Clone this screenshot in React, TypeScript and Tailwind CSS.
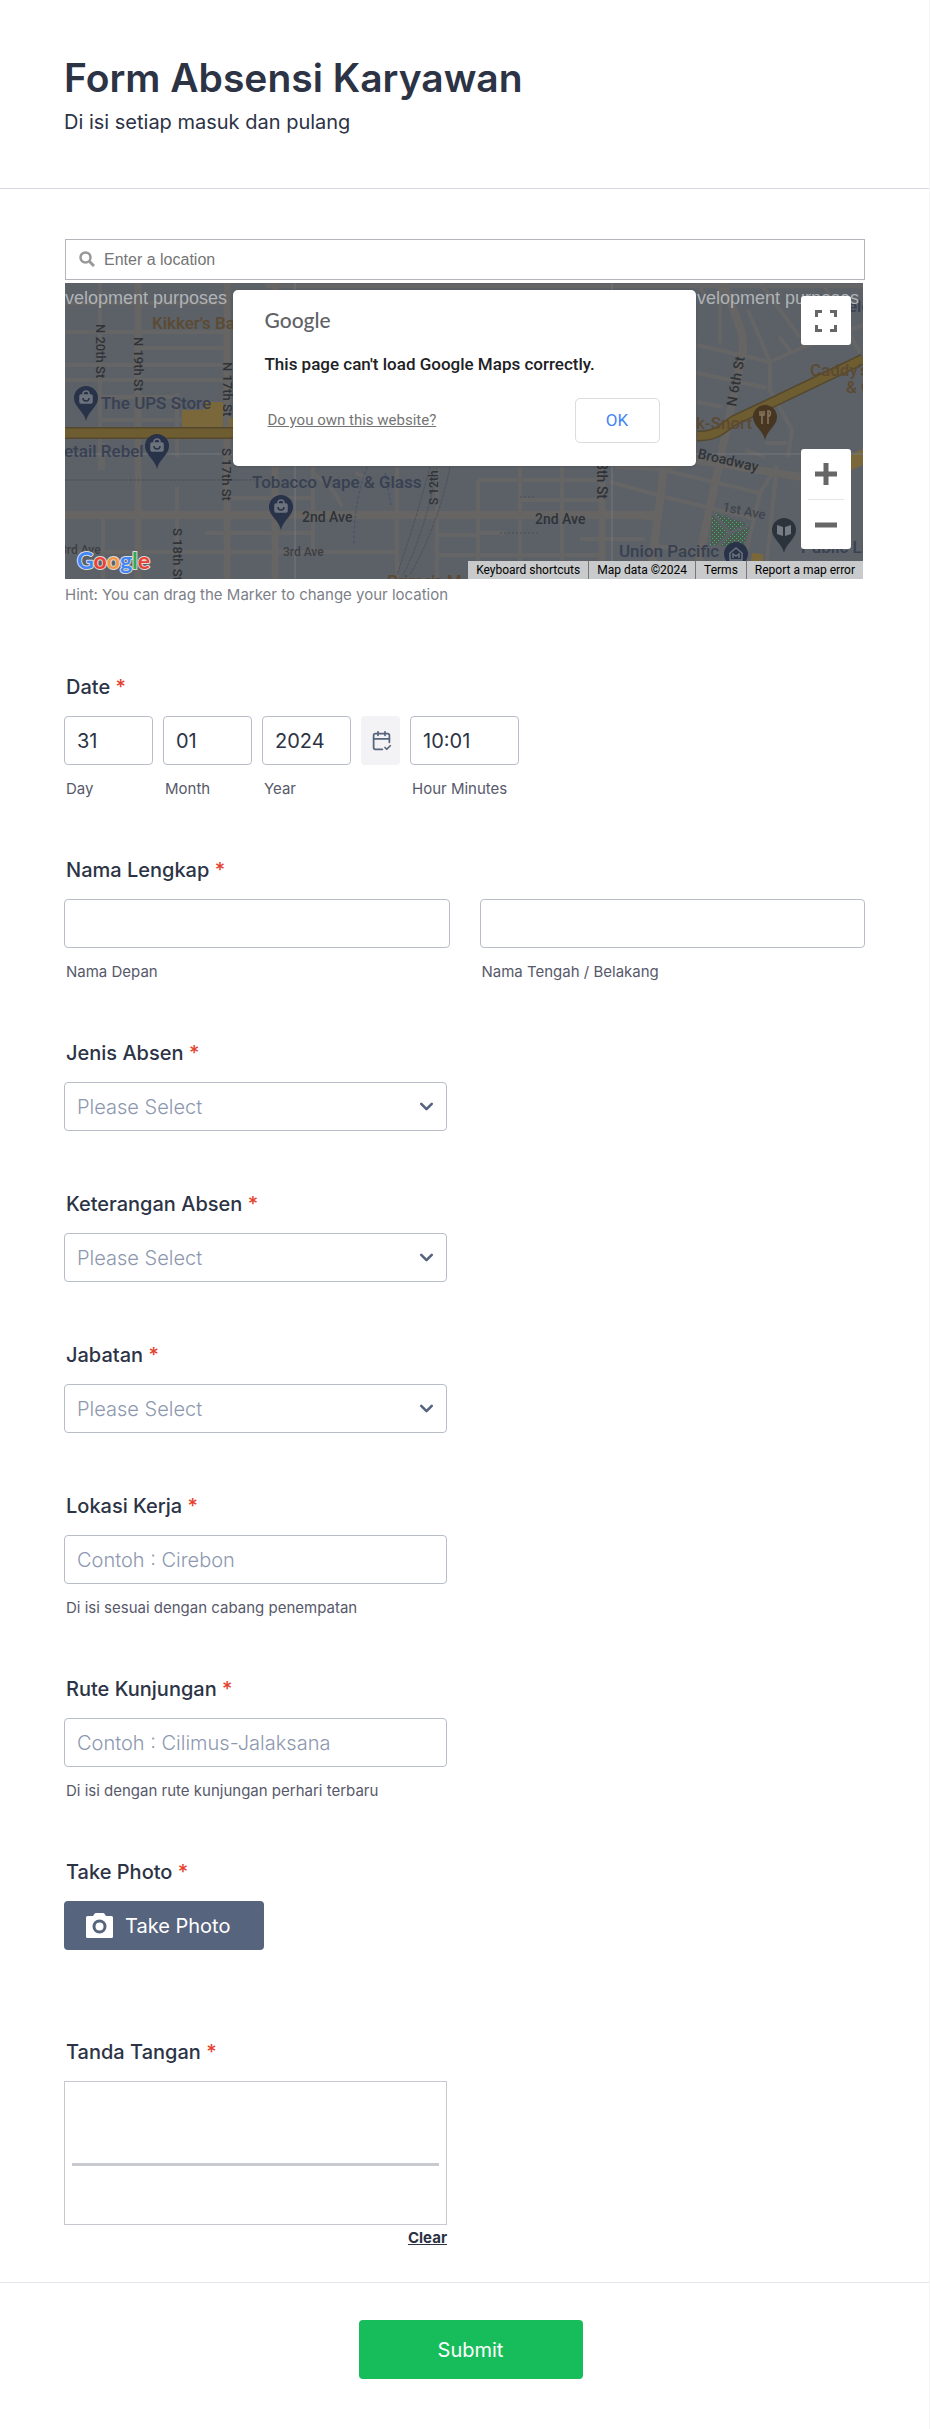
import { useState } from 'react'
import type { ReactNode } from 'react'
import { CalendarCheck2, ChevronDown } from 'lucide-react'

const INPUT_CLASS =
  'h-[49px] w-full rounded border border-[#b8bdc9] bg-white px-3 text-xl text-[#2c3345] placeholder:font-light placeholder:text-[#8d98b0] focus:border-[#2e69ff] focus:outline-none'

const JENIS_ABSEN = ['Masuk', 'Pulang']
const KETERANGAN_ABSEN = ['Hadir', 'Izin', 'Sakit', 'Cuti']
const JABATAN = ['Staff', 'Supervisor', 'Manager']

interface FieldProps {
  label: string
  htmlFor: string
  children: ReactNode
}

function Field({ label, htmlFor, children }: FieldProps) {
  return (
    <div className="flex flex-col gap-[17px]">
      <label htmlFor={htmlFor} className="self-start pl-0.5 text-xl leading-6 font-medium">
        {label} <span className="text-[#e5422f]">*</span>
      </label>
      {children}
    </div>
  )
}

interface TextFieldProps {
  id: string
  className?: string
  sublabel: string
  placeholder?: string
  defaultValue?: string
}

function TextField({ id, className = '', sublabel, placeholder, defaultValue }: TextFieldProps) {
  return (
    <div className={`flex flex-col gap-4 ${className}`}>
      <input id={id} type="text" placeholder={placeholder} defaultValue={defaultValue} className={INPUT_CLASS} />
      <label htmlFor={id} className="pl-0.5 text-[15px] leading-4 whitespace-nowrap text-[#57596a]">
        {sublabel}
      </label>
    </div>
  )
}

function SelectField({ id, options }: { id: string; options: string[] }) {
  const [value, setValue] = useState('')

  return (
    <div className="relative w-full max-w-[383px]">
      <select
        id={id}
        value={value}
        onChange={(e) => setValue(e.target.value)}
        className={`h-[49px] w-full appearance-none rounded border border-[#b8bdc9] bg-white px-3 pr-10 text-xl
          focus:border-[#2e69ff] focus:outline-none
          ${value ? 'text-[#2c3345]' : 'font-light text-[#8d98b0]'}`}
      >
        <option value="">Please Select</option>
        {options.map((option) => (
          <option key={option} value={option}>{option}</option>
        ))}
      </select>
      <ChevronDown
        size={21}
        strokeWidth={3}
        className="pointer-events-none absolute top-3.5 right-2.5 text-[#57647e]"
      />
    </div>
  )
}

function Pin({ x, y, color, kind }: { x: number; y: number; color: string; kind: 'shop' | 'food' | 'book' | 'museum' }) {
  return (
    <g transform={`translate(${x} ${y})`}>
      <path d="M0 23C-2 13-12 9-12 0a12 12 0 0 1 24 0C12 9 2 13 0 23z" fill={color} />
      {kind === 'shop' && (
        <g fill="none" stroke="#6c737d" strokeWidth="1.5">
          <rect x="-6" y="-3" width="12" height="8" rx="1" fill="#6c737d" />
          <path d="M-3-3v-1a3 3 0 0 1 6 0v1" />
          <path d="M-3 0a3 3 0 0 0 6 0" stroke={color} />
        </g>
      )}
      {kind === 'food' && (
        <g fill="none" stroke="#85735a" strokeWidth="1.6">
          <path d="M-3-6V7M-5-6v4h4v-4M3 7V0M3 0c3-1 3-6 1-6H3z" />
        </g>
      )}
      {kind === 'book' && <path d="M-7-5l6 2v9l-6-2zM7-5L1-3v9l6-2z" fill="#777c84" />}
      {kind === 'museum' && (
        <path d="M-6-1l6-5 6 5v7H-6zM-3 4V0l3 2 3-2v4" fill="none" stroke="#6c737d" strokeWidth="1.5" />
      )}
    </g>
  )
}

function MapCanvas() {
  return (
    <svg className="h-full w-full" viewBox="0 0 798 296" preserveAspectRatio="xMidYMid slice" aria-hidden="true">
      <defs>
        <pattern id="grass" width="4" height="4" patternUnits="userSpaceOnUse">
          <rect width="4" height="4" fill="#4d5b55" />
          <rect width="1" height="1" x="1" y="1" fill="#45b267" />
          <rect width="1" height="1" x="3" y="3" fill="#45b267" />
        </pattern>
      </defs>
      <rect width="798" height="296" fill="#5b6167" />

      {/* Minor streets */}
      <g fill="none" stroke="#656566" strokeWidth="4">
        <path d="M35 0V187M38 160V187M38 232V296M112 110V174M112 204V296M248 184V269M332 184V296M372 184V296M413 197V296M455 184V296M497 184V296" />
        <path d="M0 20H165M73 65H165M0 49H165M0 82H165M0 97H165M35 114H112M35 137H165M162 215H248M140 250H248M0 269H332M413 250H440M372 252H413M372 272H540" />
        <path d="M413 197H537M455 217H537M515 256H580M200 3H798" />
        <path d="M655 0V60M632 62L705 79L738 64L798 42M705 79V107L727 147L723 174M632 90L702 105M632 119L658 124" />
        <path d="M695 0L735 54M683 27L705 79M714 54L727 70M758 0L795 70M632 0L640 12" />
        <path d="M545 199L600 214L690 236M598 187L695 210L712 183M545 230L590 236M585 262L630 268M695 210L675 296M712 183L700 296M700 160H722M680 167L700 174" />
        <path d="M550 184L600 186M248 190C268 205 272 212 277 224M290 190Q300 192 308 204" />
      </g>

      {/* Main streets */}
      <g fill="none" stroke="#676564" strokeWidth="7">
        <path d="M73 0V296M162 0V296M210 0V296M537 176V296" />
        <path d="M0 232H590" strokeWidth="8" />
        <path d="M658 0L675 44Q680 60 677 74L645 224L630 296" strokeWidth="8" />
        <path d="M600 176L585 296" strokeWidth="8" />
        <path d="M598 184L632 177L735 194L798 170" strokeWidth="8" />
      </g>

      {/* Rails and trails */}
      <g fill="none" stroke="#4c5158" strokeWidth="1">
        <path d="M0 197H190M365 184Q350 240 332 292M372 184Q360 250 338 292M385 184Q374 240 345 292" strokeDasharray="3 1" />
        <path d="M302 184Q288 222 289 262M320 190L326 222" stroke="#45506a" strokeDasharray="3 2" />
        <path d="M435 250H475M455 214H470" strokeDasharray="2 2" />
      </g>

      {/* Highway */}
      <path d="M117 127H138V119H158V145H117zM164 135H170V146H164z" fill="#7a683a" />
      <path d="M0 150H170" stroke="#54492f" strokeWidth="12" />
      <path d="M0 150H170" stroke="#6f5d32" strokeWidth="9" />
      <path d="M632 153C650 153 655 148 668 138L704 121L798 76" fill="none" stroke="#54492f" strokeWidth="11" />
      <path d="M632 153C650 153 655 148 668 138L704 121L798 76" fill="none" stroke="#6f5d32" strokeWidth="8" />
      <path d="M786 172L798 166V182L786 187zM778 163L788 159M687 270L698 271V278L686 278z" fill="#7a683a" />

      {/* Park */}
      <path d="M647 229L685 242L678 264L645 262z" fill="url(#grass)" />
      <path d="M647 229L665 250L685 242M665 250L652 264" fill="none" stroke="#5b6167" strokeWidth="3" />

      {/* Tile seams */}
      <path d="M0 171H798M230 0V296M547 0V296" stroke="#74797e" strokeWidth="1" fill="none" />

      <g fontFamily="Roboto, sans-serif" fontSize="14" fontWeight="500" fill="#2f3338">
        <text x="237" y="239">2nd Ave</text>
        <text x="470" y="241">2nd Ave</text>
        <text x="218" y="273" fontSize="12" fill="#3b3f45">3rd Ave</text>
        <text x="-5" y="271" fontSize="12" fill="#3b3f45">3rd Ave</text>
        <text transform="translate(632 175) rotate(13)">Broadway</text>
        <text transform="translate(657 228) rotate(11)" fontSize="13" fill="#41454c">1st Ave</text>
        <text transform="translate(671 124) rotate(-80)">N 6th St</text>
        <text transform="translate(31 41) rotate(90)" fontSize="13">N 20th St</text>
        <text transform="translate(69 54) rotate(90)" fontSize="13">N 19th St</text>
        <text transform="translate(158 79) rotate(90)" fontSize="13">N 17th St</text>
        <text transform="translate(157 165) rotate(90)" fontSize="13">S 17th St</text>
        <text transform="translate(108 245) rotate(90)" fontSize="13">S 18th St</text>
        <text transform="translate(373 222) rotate(-90)" fontSize="12">S 12th</text>
        <text transform="translate(532 179) rotate(90)">8th St</text>
      </g>
      <g fontFamily="Roboto, sans-serif" fontSize="17" fontWeight="500" fill="#384052">
        <text x="36" y="126">The UPS Store</text>
        <text x="-1" y="174">etail Rebel</text>
        <text x="187" y="205">Tobacco Vape &amp; Glass</text>
        <text x="554" y="274">Union Pacific</text>
        <text x="736" y="270">Public Li</text>
        <text x="773" y="29">field</text>
      </g>
      <g fontFamily="Roboto, sans-serif" fontSize="17" fontWeight="500" fill="#5c4a32">
        <text x="87" y="46">Kikker's Ba</text>
        <text x="631" y="146">k-Snort</text>
        <text x="745" y="93">Caddy's</text>
        <text x="781" y="110">&amp; G</text>
        <text x="322" y="304">Primo's M</text>
      </g>

      <Pin x={21} y={115} color="#283248" kind="shop" />
      <Pin x={92} y={163} color="#283248" kind="shop" />
      <Pin x={216} y={224} color="#283248" kind="shop" />
      <Pin x={700} y={134} color="#463622" kind="food" />
      <Pin x={719} y={247} color="#2c333b" kind="book" />
      <Pin x={671} y={271} color="#283248" kind="museum" />

      <g fontFamily="Liberation Sans, Arial, sans-serif" fontSize="18" fill="#b0b3b6">
        <text x="0" y="21">velopment purposes</text>
        <text x="632" y="21">velopment purposes</text>
      </g>

      <text
        x="12"
        y="286"
        fontFamily="Lato, sans-serif"
        fontSize="23"
        fontWeight="700"
        stroke="#dcdcdc"
        strokeWidth="2"
        strokeLinejoin="round"
        paintOrder="stroke"
      >
        <tspan fill="#4285f4">G</tspan>
        <tspan fill="#ea4335">o</tspan>
        <tspan fill="#f29945">o</tspan>
        <tspan fill="#4285f4">g</tspan>
        <tspan fill="#34a853">l</tspan>
        <tspan fill="#ea4335">e</tspan>
      </text>
    </svg>
  )
}

function LocationMap() {
  const [dialogOpen, setDialogOpen] = useState(true)

  return (
    <div className="relative mr-0.5 h-[296px] overflow-hidden font-[Roboto,sans-serif]">
      <MapCanvas />

      {dialogOpen && (
        <div
          role="dialog"
          aria-label="Google Maps error"
          className="absolute inset-x-0 top-[7px] mx-auto w-full max-w-[463px] rounded-[5px] bg-white px-8 pt-[18px] pb-[23px] shadow"
        >
          <div className="font-[Lato,sans-serif] text-[21px] leading-6 font-medium text-[#5f6368]">Google</div>
          <p className="mt-5 text-[17px] leading-6 font-medium text-[#202124]">
            This page can't load Google Maps correctly.
          </p>
          <div className="mt-[22px] flex items-center justify-between">
            <a href="#" className="pl-[3px] text-[15px] text-[#757575] underline">
              Do you own this website?
            </a>
            <button
              type="button"
              onClick={() => setDialogOpen(false)}
              className="mr-1 h-[45px] w-[85px] rounded-[5px] border border-[#dadce0] text-[17px] text-[#4285f4]"
            >
              OK
            </button>
          </div>
        </div>
      )}

      {/* Map controls */}
      <button
        type="button"
        aria-label="Toggle fullscreen view"
        className="absolute top-[13px] right-3 flex h-[49px] w-[50px] items-center justify-center rounded-[3px] bg-white"
      >
        <svg width="22" height="22" viewBox="0 0 22 22" fill="none" stroke="#666" strokeWidth="3">
          <path d="M1.500 7V1.500H7M15 1.500h5.500V7M20.500 15v5.500H15M7 20.500H1.500V15" />
        </svg>
      </button>
      <div className="absolute right-3 bottom-[30px] flex w-[50px] flex-col items-center rounded-[3px] bg-white">
        <button type="button" aria-label="Zoom in" className="flex h-[50px] w-full items-center justify-center">
          <svg width="22" height="22" viewBox="0 0 22 22" stroke="#666" strokeWidth="5">
            <path d="M11 0v22M0 11h22" />
          </svg>
        </button>
        <div className="h-px w-9 bg-[#e6e6e6]" />
        <button type="button" aria-label="Zoom out" className="flex h-[49px] w-full items-center justify-center">
          <svg width="22" height="22" viewBox="0 0 22 22" stroke="#666" strokeWidth="5">
            <path d="M0 11h22" />
          </svg>
        </button>
      </div>

      <div className="absolute right-0 bottom-0 flex h-[18px] divide-x divide-[#777] text-xs leading-[18px] text-black">
        <button type="button" className="bg-[#c9cacb] px-2">Keyboard shortcuts</button>
        <span className="bg-[#c9cacb] px-2">Map data ©2024</span>
        <a href="#" className="bg-[#c9cacb] px-2">Terms</a>
        <a href="#" className="bg-[#c9cacb] px-2">Report a map error</a>
      </div>
    </div>
  )
}

export default function App() {
  return (
    <form
      onSubmit={(e) => e.preventDefault()}
      className="w-full border-r border-[#f5f5f8] bg-white font-[Inter,sans-serif] text-[#2c3345]"
    >
      {/* Header */}
      <header className="border-b border-[#d7d8e1] px-16 py-[54px]">
        <h1 className="text-[39px] leading-[48px] font-semibold">Form Absensi Karyawan</h1>
        <p className="mt-2 text-xl leading-6">Di isi setiap masuk dan pulang</p>
      </header>

      <div className="flex flex-col gap-[61px] px-16 pt-[50px] pb-9">
        {/* Location */}
        <div className="mb-[11px] ml-px">
          <div className="relative">
            <svg
              className="absolute top-3 left-3.5"
              width="16"
              height="16"
              viewBox="0 0 16 16"
              fill="none"
              stroke="#999"
            >
              <circle cx="6.500" cy="6.500" r="5" strokeWidth="2.500" />
              <path d="M10 10l5 5" strokeWidth="3" />
            </svg>
            <input
              type="text"
              aria-label="Enter a location"
              placeholder="Enter a location"
              className="block h-[41px] w-full border border-[#b4b5ba] pl-[38px] font-[Liberation_Sans,Arial,sans-serif] text-base placeholder:text-[#757575] focus:outline-none"
            />
          </div>
          <div className="mt-[3px]">
            <LocationMap />
          </div>
          <p className="mt-2 text-[15px] leading-4 text-[#7d7f88]">
            Hint: You can drag the Marker to change your location
          </p>
        </div>

        <Field label="Date" htmlFor="day">
          <div className="flex items-start gap-2.5">
            <TextField id="day" sublabel="Day" defaultValue="31" className="w-[89px]" />
            <TextField id="month" sublabel="Month" defaultValue="01" className="w-[89px]" />
            <TextField id="year" sublabel="Year" defaultValue="2024" className="w-[89px]" />
            <button
              type="button"
              aria-label="Choose date"
              className="flex h-[49px] w-[39px] items-center justify-center rounded bg-[#f3f3f6] pl-0.5 text-[#57647e]"
            >
              <CalendarCheck2 size={21} strokeWidth={2} />
            </button>
            <TextField id="time" sublabel="Hour Minutes" defaultValue="10:01" className="w-[109px]" />
          </div>
        </Field>

        <Field label="Nama Lengkap" htmlFor="first-name">
          <div className="grid grid-cols-2 gap-[30px]">
            <TextField id="first-name" sublabel="Nama Depan" />
            <TextField id="last-name" sublabel="Nama Tengah / Belakang" />
          </div>
        </Field>

        <Field label="Jenis Absen" htmlFor="jenis">
          <SelectField id="jenis" options={JENIS_ABSEN} />
        </Field>

        <Field label="Keterangan Absen" htmlFor="keterangan">
          <SelectField id="keterangan" options={KETERANGAN_ABSEN} />
        </Field>

        <Field label="Jabatan" htmlFor="jabatan">
          <SelectField id="jabatan" options={JABATAN} />
        </Field>

        <Field label="Lokasi Kerja" htmlFor="lokasi">
          <TextField
            id="lokasi"
            placeholder="Contoh : Cirebon"
            sublabel="Di isi sesuai dengan cabang penempatan"
            className="w-full max-w-[383px]"
          />
        </Field>

        <Field label="Rute Kunjungan" htmlFor="rute">
          <TextField
            id="rute"
            placeholder="Contoh : Cilimus-Jalaksana"
            sublabel="Di isi dengan rute kunjungan perhari terbaru"
            className="w-full max-w-[383px]"
          />
        </Field>

        <div className="mb-[29px]">
          <Field label="Take Photo" htmlFor="photo">
            <button
              id="photo"
              type="button"
              className="flex h-[49px] w-[200px] items-center gap-3 rounded bg-[#57647e] pl-[22px] text-xl text-white"
            >
              <svg width="27" height="25" viewBox="0 0 27 25" fill="none">
                <path
                  d="M1.500 3H7l1.500-2.200Q9 0 10 0h7q1 0 1.500.8L20 3h5.500Q27 3 27 4.500v19q0 1.500-1.500 1.500h-24Q0 25 0 23.500v-19Q0 3 1.500 3z"
                  fill="#fff"
                />
                <circle cx="13.500" cy="13.500" r="5.500" stroke="#57647e" strokeWidth="3" />
              </svg>
              Take Photo
            </button>
          </Field>
        </div>

        <Field label="Tanda Tangan" htmlFor="signature">
          <div className="flex w-full max-w-[383px] flex-col">
            <div id="signature" className="flex h-36 flex-col justify-end border border-[#c8c9d0] px-[7px] pb-[58px]">
              <div className="h-[3px] bg-[#c9cad0]" />
            </div>
            <button type="button" className="mt-[5px] self-end text-[15px] leading-4 font-bold underline">
              Clear
            </button>
          </div>
        </Field>
      </div>

      <footer className="flex justify-center border-t border-[#e6e6ec] pt-[37px] pb-[50px] pl-3">
        <button type="submit" className="h-[59px] w-[224px] rounded bg-[#18bd5b] text-xl text-white">
          Submit
        </button>
      </footer>
    </form>
  )
}
